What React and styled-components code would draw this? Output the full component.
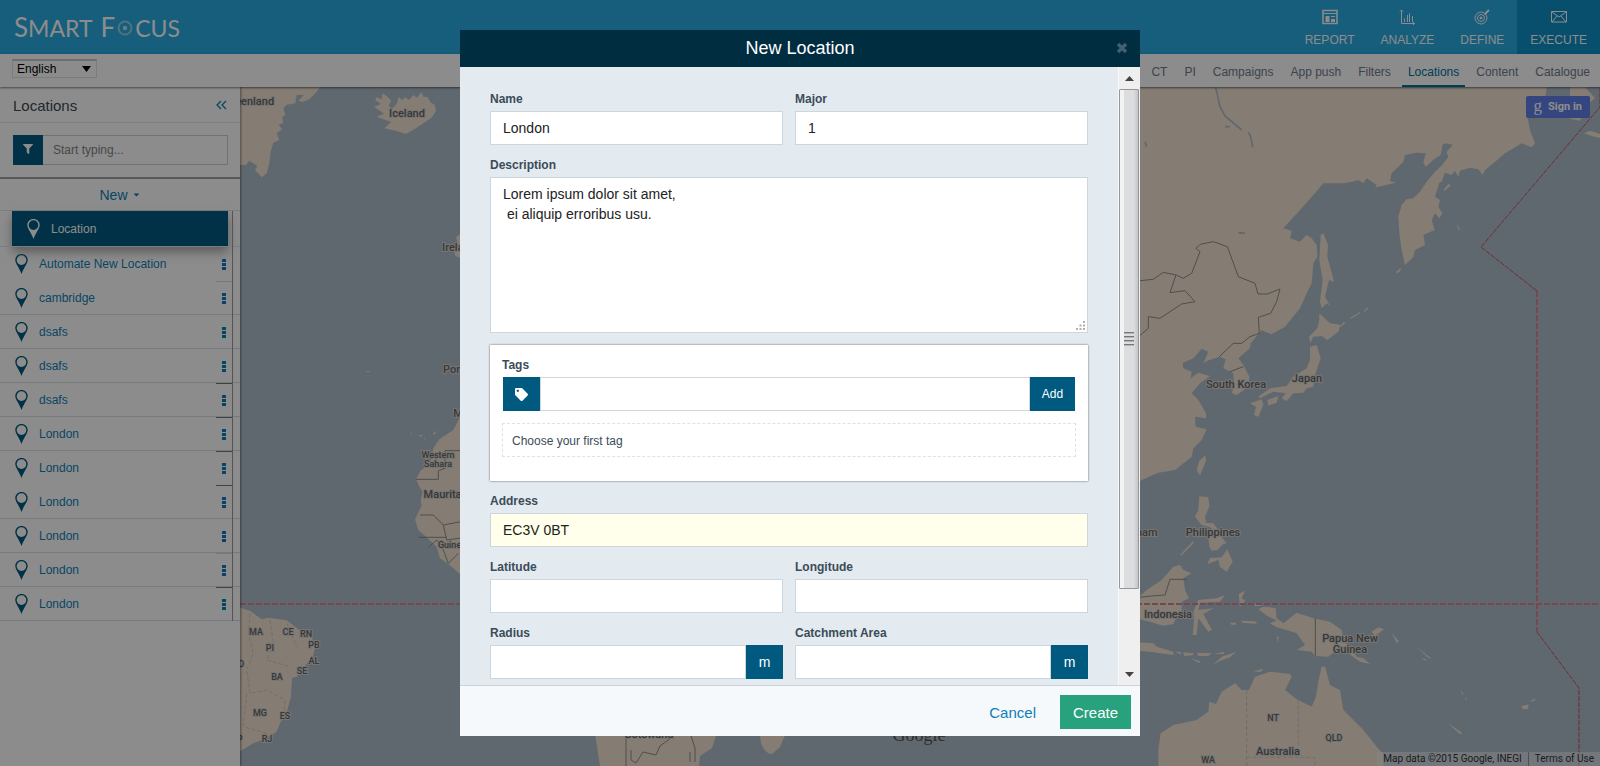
import React from "react";
import styled, { createGlobalStyle, css } from "styled-components";
import { FaCaretDown, FaFilter, FaTag } from "react-icons/fa";

const navy = "#005a80";
const link = "#0d7fb8";
const border = "#ccd6dd";

const GlobalStyle = createGlobalStyle`
  *, *::before, *::after { box-sizing: border-box; }
  body { margin: 0; background: #fff; }
  body, button, input, select, textarea {
    font-family: "Liberation Sans", Arial, sans-serif;
    font-size: 12px;
  }
  button { border: 0; padding: 0; background: none; cursor: pointer; }
`;

const Page = styled.div`
  display: flex;
  flex-direction: column;
  height: 100vh;
  min-height: 640px;
  overflow: hidden;
`;

/* ---------- top bars ---------- */

const TopBar = styled.header`
  display: flex;
  justify-content: space-between;
  height: 54px;
  background: #28abe1;
  color: #fff;
`;

const Logo = styled.a`
  display: flex;
  align-items: baseline;
  padding: 13px 0 0 14px;
  color: #fff;
  font: 23px/28px Lato, sans-serif;
  text-decoration: none;
`;

const Initial = styled.span`
  font-size: 26px;
  margin-left: ${(p) => (p.$spaced ? "8px" : "0")};
`;

const Target = styled.svg`
  align-self: flex-start;
  margin: 7px 2px 0;
`;

const MainNav = styled.nav`
  display: flex;
`;

const MainTab = styled.a`
  display: flex;
  flex-direction: column;
  align-items: center;
  gap: 7px;
  padding: 9px 13px 0;
  color: #fff;
  line-height: 16px;
  text-decoration: none;
  background: ${(p) => (p.$active ? "#0e90c6" : "none")};
`;

const SubBar = styled.div`
  display: flex;
  justify-content: space-between;
  height: 33px;
  padding: 0 4px 0 12px;
  background: #fff;
  position: relative;
  z-index: 2;
  box-shadow: 0 1px 2px rgba(0, 0, 0, 0.5);
`;

const LanguageBox = styled.div`
  position: relative;
  align-self: flex-start;
  margin-top: 5px;

  svg {
    position: absolute;
    right: 6px;
    top: 7px;
    pointer-events: none;
  }
`;

const LanguageSelect = styled.select`
  appearance: none;
  width: 85px;
  height: 19px;
  padding: 0 4px;
  border: 1px solid #e2e2e2;
  border-top: 2px solid #c8c8c8;
  background: #fff;
  color: #000;
`;

const SubNav = styled.nav`
  display: flex;
  gap: 5px;
`;

const SubTab = styled.a`
  padding: 0 6px;
  line-height: 37px;
  height: 33px;
  color: ${(p) => (p.$active ? "#00709f" : "#6f7a8c")};
  text-decoration: none;
  border-bottom: ${(p) => (p.$active ? "2px solid #00709f" : "0")};
`;

/* ---------- sidebar ---------- */

const Main = styled.main`
  display: flex;
  flex: 1;
  min-height: 0;
`;

const Sidebar = styled.aside`
  flex: 0 0 240px;
  background: #fff;
  position: relative;
  z-index: 1;
  box-shadow: 1px 0 2px rgba(0, 0, 0, 0.4);
`;

const SideHead = styled.div`
  display: flex;
  align-items: center;
  justify-content: space-between;
  height: 36px;
  padding: 2px 13px 0;
  border-bottom: 1px solid #e6ebee;

  h2 {
    margin: 0;
    font-size: 15px;
    font-weight: 400;
    color: #3c4a55;
  }
  button { height: 18px; line-height: 1; }
`;

const SearchRow = styled.div`
  display: flex;
  height: 56px;
  padding: 12px 12px 14px 13px;
  border-bottom: 2px solid #9aa0a4;

  button {
    width: 30px;
    height: 30px;
    background: ${navy};
    color: #fff;
    font-size: 10px;
    line-height: 1;
  }
  input {
    flex: 1;
    min-width: 0;
    height: 30px;
    padding: 0 10px;
    border: 1px solid #c5d3dd;
    border-left: 0;
  }
  input::placeholder { color: #7f8488; }
`;

const NewButton = styled.button`
  display: flex;
  align-items: center;
  justify-content: center;
  gap: 4px;
  width: 100%;
  height: 32px;
  border-bottom: 1px solid #e0e6ea;
  color: ${link};
  font-size: 14px;

  svg { font-size: 9px; }
`;

const CurrentItem = styled.a`
  display: flex;
  align-items: center;
  gap: 11px;
  height: 35px;
  margin: 0 12px;
  padding: 0 15px;
  background: ${navy};
  color: #fff;
  text-decoration: none;
  box-shadow: 0 6px 10px rgba(0, 0, 0, 0.35);
`;

const ListArea = styled.div`
  position: relative;
  &::after {
    content: "";
    position: absolute;
    top: 0;
    bottom: 0;
    right: 7px;
    border-right: 1px solid #9a9a9a;
  }
`;

const List = styled.ul`
  margin: 0;
  padding: 0;
  list-style: none;
  border-top: 1px solid #dde3e7;
`;

const Row = styled.li`
  display: flex;
  align-items: center;
  height: 34px;
  padding: 0 12px 0 15px;
  border-bottom: 1px solid ${(p) => (p.$line ? "#d8dfe3" : "transparent")};
  position: relative;

  a {
    display: flex;
    align-items: center;
    gap: 11px;
    flex: 1;
    color: ${link};
    text-decoration: none;
  }
  ${(p) =>
    p.$tick &&
    css`
      &::after {
        content: "";
        position: absolute;
        right: 8px;
        bottom: -2px;
        width: 16px;
        border-bottom: 1px solid ${p.$tick};
      }
    `}
`;

const Dots = styled.button`
  display: flex;
  flex-direction: column;
  gap: 1px;
  padding: 4px 2px 2px;

  span { width: 4px; height: 3px; background: ${link}; }
`;

/* ---------- map ---------- */

const MapArea = styled.section`
  flex: 1;
  min-width: 0;
  position: relative;
  background: #afbdca;

  > svg { display: block; width: 100%; height: 100%; overflow: visible; }
`;

const SignIn = styled.button`
  position: absolute;
  top: 9px;
  right: 10px;
  display: flex;
  align-items: center;
  gap: 6px;
  height: 22px;
  padding: 0 8px;
  border-radius: 2px;
  background: #5f7fe8;
  color: #fff;
  font: 700 11px/22px Roboto, sans-serif;

  span { font: 17px/16px "Liberation Serif", serif; padding-bottom: 3px; }
`;

const Credits = styled.div`
  position: absolute;
  right: 0;
  bottom: 0;
  display: flex;
  height: 14px;
  background: rgba(245, 245, 245, 0.5);
  color: #444;
  font: 10px/14px Roboto, sans-serif;

  span, a { padding: 0 6px; color: #333; text-decoration: none; }
  a { border-left: 1px solid #8e979f; }
`;

/* ---------- dialog ---------- */

const Backdrop = styled.div`
  position: fixed;
  inset: 0;
  z-index: 10;
  display: flex;
  justify-content: center;
  padding: 30px;
  background: rgba(0, 0, 0, 0.45);
`;

const Dialog = styled.form`
  display: flex;
  flex-direction: column;
  width: 100%;
  max-width: 680px;
  background: #e3eaf0;
`;

const DialogHead = styled.div`
  display: flex;
  flex: none;
  align-items: center;
  height: 37px;
  padding: 0 12px;
  background: #002d40;
  color: #fff;

  h1 {
    flex: 1;
    margin: 0;
    padding-left: 12px;
    text-align: center;
    font-size: 18px;
    font-weight: 400;
  }
  button { height: 14px; line-height: 1; }
`;

const DialogBody = styled.div`
  display: flex;
  flex: 1;
  min-height: 0;
`;

const Fields = styled.div`
  flex: 1;
  display: flex;
  flex-direction: column;
  gap: 12px;
  padding: 24px 30px 0;
  overflow: hidden;
`;

const Pair = styled.div`
  display: grid;
  grid-template-columns: 1fr 1fr;
  gap: 12px;
`;

const Field = styled.div`
  display: flex;
  flex-direction: column;
  gap: 4px;
  position: relative;
`;

const Label = styled.label`
  color: #3b4c58;
  font-weight: 700;
  line-height: 16px;
`;

const inputStyle = css`
  width: 100%;
  min-width: 0;
  border: 1px solid ${border};
  border-radius: 0;
  color: #222;
  font-size: 14px;
  outline: 0;
`;

const TextInput = styled.input`
  ${inputStyle}
  height: 34px;
  padding: 0 12px;
  background: ${(p) => (p.$filled ? "#ffffec" : "#fff")};
`;

const TextArea = styled.textarea`
  ${inputStyle}
  height: 156px;
  padding: 6px 12px;
  line-height: 20px;
  resize: none;
  overflow: hidden;
  background: #fff;
`;

const Grip = styled.svg`
  position: absolute;
  right: 3px;
  bottom: 3px;
`;

const Group = styled.div`
  display: flex;
  padding: ${(p) => (p.$inset ? "0 1px" : "0")};
`;

const AddOn = styled.span`
  flex: none;
  display: flex;
  align-items: center;
  justify-content: center;
  width: 37px;
  height: 34px;
  background: ${navy};
  color: #fff;
  font-size: 14px;
`;

const AddButton = styled.button`
  flex: none;
  width: 45px;
  height: 34px;
  background: ${navy};
  color: #fff;
`;

const TagPanel = styled.div`
  display: flex;
  flex-direction: column;
  gap: 12px;
  padding: 12px 12px 24px;
  background: #fff;
  box-shadow: 0 0 2px rgba(0, 0, 0, 0.6);
`;

const NoTags = styled.div`
  height: 34px;
  padding: 0 9px;
  border: 1px dashed #dbe3e6;
  color: #3b4c58;
  line-height: 34px;
`;

const ScrollTrack = styled.div`
  flex: 0 0 22px;
  display: flex;
  flex-direction: column;
  align-items: center;
  padding: 8px 1px 7px 0;
  background: #efefef;
  border-left: 1px solid #f8f8f8;
`;

const Thumb = styled.div`
  display: flex;
  flex-direction: column;
  align-items: center;
  justify-content: center;
  gap: 2px;
  align-self: stretch;
  height: 83%;
  margin: 8px 0 auto;
  border: 1px solid #979797;
  border-radius: 1px;
  background: linear-gradient(90deg, #f3f3f3 0 20%, #dcdddf 25% 75%, #c4c5c9);

  span { width: 10px; height: 2px; background: #777; border-bottom: 1px solid #b4b4b4; }
`;

const DialogFoot = styled.div`
  display: flex;
  flex: none;
  align-items: center;
  justify-content: flex-end;
  gap: 24px;
  height: 51px;
  padding: 2px 9px 0;
  border-top: 1px solid #cdd3d8;
  background: #f5f9fc;
`;

const Cancel = styled.button`
  color: ${link};
  font-size: 15px;
`;

const Create = styled.button`
  height: 34px;
  padding: 0 13px;
  background: #27a27c;
  color: #fff;
  font-size: 15px;
`;

/* ---------- drawings ---------- */

const Pin = ({ color }) => (
  <svg width="13" height="20" viewBox="0 0 13 20" aria-hidden="true">
    <path d="M6.500 0C2.900 0 .3 2.700.3 6c0 3.600 3.700 7.200 6.200 14C9 13.200 12.700 9.600 12.700 6c0-3.300-2.600-6-6.200-6zm0 1.300a4.700 4.700 0 0 1 4.800 4.800c0 2.900-2.100 4.900-4.800 4.900S1.700 9 1.700 6.100A4.700 4.700 0 0 1 6.500 1.300z" fill={color} />
  </svg>
);

const navIcons = {
  REPORT: (
    <g fill="none" stroke="#fff">
      <path d="M1 1.500h14v13H1z" strokeWidth="1.500" />
      <path d="M1 4.500h14" />
      <path d="M3.500 7h4v6h-4zM9 10h4v3H9z" fill="#fff" stroke="none" />
      <path d="M9 7.500h4" />
    </g>
  ),
  ANALYZE: (
    <path d="M2.500 1v13.500H16M1 2.500 2.500 1 4 2.500M14 13l1.500 1.500L14 16M5.500 13V9.500M8.500 13V6M10.500 13V4.500M13.500 13V7" fill="none" stroke="#fff" />
  ),
  DEFINE: (
    <g fill="none" stroke="#fff">
      <circle cx="7" cy="9" r="6" />
      <circle cx="7" cy="9" r="3.500" />
      <circle cx="7" cy="9" r="1" fill="#fff" />
      <path d="M10.500 5.500 15 1" strokeWidth="2" />
    </g>
  ),
  EXECUTE: (
    <path d="M.5 2.500h15v10.500H.5zM1 3l7 5 7-5M1 13l5-6M15 13l-5-6" fill="none" stroke="#fff" />
  ),
};

const land = "#f2e3d1";
const third = "scale(0.33333)";

const places = [
  [249, 105, "Greenland", 11], [407, 117, "Iceland", 11], [459, 251, "Ireland", 11],
  [464, 373, "Portugal", 11], [475, 417, "Morocco", 11], [438, 458, "Western", 9],
  [438, 467, "Sahara", 9], [450, 498, "Mauritania", 11], [452, 548, "Guinea", 9],
  [256, 635, "MA", 9], [288, 635, "CE", 9], [306, 637, "RN", 9], [270, 651, "PI", 9],
  [314, 648, "PB", 9], [314, 664, "AL", 9], [302, 674, "SE", 9], [238, 667, "GO", 9],
  [277, 680, "BA", 9], [260, 716, "MG", 9], [285, 719, "ES", 9], [267, 742, "RJ", 9],
  [237, 742, "SP", 9], [1236, 388, "South Korea", 11], [1307, 382, "Japan", 11],
  [1213, 536, "Philippines", 11], [1137, 536, "Vietnam", 11], [1168, 618, "Indonesia", 11],
  [1350, 642, "Papua New", 11], [1350, 653, "Guinea", 11], [1273, 721, "NT", 9],
  [1334, 741, "QLD", 9], [1278, 755, "Australia", 11], [1208, 763, "WA", 9],
  [649, 738, "Botswana", 11],
];

const WorldMap = () => (
  <svg viewBox="240 87 1360 679" preserveAspectRatio="xMidYMid slice" role="img" aria-label="World map">
    <g fill={land}>
      <g transform={third}>
        <path d="M720 262H960L950 275 928 298 908 306 895 302 912 284 890 285 886 310 860 314 850 325 856 345 846 352 850 368 836 374 846 388 830 400 838 420 820 428 812 455 808 490 800 520 786 532 765 510 772 498 748 482 738 494 720 495Z" />
        <path d="M1122 320 1142 312 1126 300 1130 292 1145 298 1148 280 1162 290 1174 302 1166 316 1175 327 1190 312 1196 290 1206 300 1216 292 1228 300 1240 285 1250 293 1265 277 1270 290 1284 292 1290 306 1304 314 1308 332 1296 352 1270 370 1248 385 1218 402 1190 393 1153 385 1174 366 1130 350 1152 341Z" />
        <path d="M1380 703 1368 712 1375 735 1362 752 1366 768 1400 780V703Z" />
        <path d="M1400 1255H1378L1360 1290 1318 1318 1300 1345 1290 1390 1262 1412 1248 1438 1258 1460 1268 1475 1262 1500 1265 1517 1245 1558 1255 1590 1280 1612 1310 1640 1320 1675 1345 1692 1380 1722 1400 1740Z" />
        <path d="M1255 1306l10-2v8zM1270 1314l6-1v6zM1302 1292l6 8-8 6zM1232 1298h4v3h-4zM1100 1113h8v3h-8z" />
        <path d="M720 1823 750 1832 785 1858 806 1853 860 1861 895 1888 935 1910 945 1945 938 1970 925 1985 890 2030 876 2034 873 2090 862 2130 840 2170 830 2195 800 2214 760 2230 720 2254Z" />
      </g>
      <path d="M594 720 596 740 600 766H699L700 756 712 748 716 736V720ZM758 720 761 743Q765 754 772 754L780 747 786 733V720Z" />
      <g transform={`translate(1130 0) ${third}`}>
        <path d="M0 262H1250L1245 300 1193 355 1200 390 1215 430 1205 442 1175 430 1125 460 1090 490 1065 510 1058 525 1045 508 1020 503 990 512 985 530 975 512 965 525 945 518 935 545 928 548 915 590 930 600 925 620 937 640 928 655 915 640 905 660 914 690 880 705 885 735 855 750 850 770 825 795 815 750 808 700 805 650 815 615 830 598 850 595 870 575 890 545 915 515 932 500 955 472 950 455 968 435 950 430 938 433 932 465 912 478 888 500 880 490 887 460 860 458 825 465 820 485 785 520 780 543 797 548 755 558 735 563 740 555 710 535 700 550 685 540 665 545 640 550 580 550 555 580 510 630 460 685 485 692 480 715 510 725 530 705 545 715 560 735 562 770 550 790 545 850 530 880 510 925 465 980 425 1003 405 995 395 990 362 1030 360 1045 325 1075 340 1095 358 1130 355 1160 320 1185 306 1180 312 1150 310 1120 280 1105 287 1078 268 1070 232 1082 220 1090 235 1055 215 1046 190 1075 158 1088 160 1105 185 1115 182 1135 205 1118 240 1128 210 1150 185 1180 205 1200 228 1240 228 1255 195 1250 197 1280 230 1288 215 1320 190 1345 185 1370 135 1410 85 1418 35 1440 0 1470Z" />
        <path d="M1320 262H1365L1395 294 1375 312 1350 362 1320 356ZM1362 400 1380 392 1410 402V414L1385 408ZM940 570 955 552 962 556 945 572ZM980 672 992 690 985 688Z" />
        <path d="M572 705 580 700 594 735 592 770 612 845 597 840 585 890 600 918 590 910 575 925 570 905 578 840 568 780Z" />
        <path d="M568 940 600 970 632 974 625 995 592 1020 575 1008 550 1010 541 1030 537 1010 562 985 568 960ZM632 978 642 966 646 968 634 980ZM660 954 690 936 692 938 662 957ZM702 932 714 922 716 925 704 935ZM798 816 812 804 812 812 802 820Z" />
        <path d="M540 1040 560 1035 572 1075 555 1125 550 1160 530 1165 520 1178 490 1180 470 1203 455 1195 468 1180 430 1175 390 1195 385 1190 420 1165 470 1158 490 1130 530 1105 540 1080Z" />
        <path d="M360 1210 395 1198 400 1215 385 1250 372 1245 378 1220ZM412 1200 445 1188 440 1208 415 1217Z" />
        <path d="M225 1367 229 1380 210 1426 200 1410 208 1382Z" />
        <path d="M208 1489 235 1492 238 1520 225 1550 228 1568 250 1570 265 1590 262 1600 240 1582 215 1575 195 1550 205 1530ZM235 1612 270 1605 290 1630 280 1632 262 1650 245 1652 238 1640ZM292 1648 308 1685 290 1715 270 1700 265 1680 232 1692 240 1674 275 1672ZM150 1665 190 1622 190 1630 155 1666Z" />
        <path d="M0 1815 50 1770 95 1740 130 1700 150 1695 160 1710 184 1720 160 1735 165 1770 177 1795 155 1805 155 1835 140 1850 130 1872 100 1877 60 1865 0 1850Z" />
        <path d="M190 1835 205 1800 260 1795 285 1785 270 1805 210 1808 205 1830 250 1825 220 1842 246 1890 235 1895 205 1855 200 1905 188 1905 192 1860ZM326 1782 345 1772 335 1795 346 1802 330 1820Z" />
        <path d="M0 1925 70 1930 80 1940 130 1955 130 1965 60 1955 0 1950ZM135 1955l18 1v8zM160 1957l30 3v6l-28 2zM200 1958l45 2-10 8h-30zM250 1962l32-6v6zM180 1975l30 8-2 6zM248 1996 275 1970 318 1956 300 1972 270 1982Z" />
        <path d="M385 1828 400 1820 437 1824 440 1855 460 1870 500 1838 550 1855 600 1865 635 1890 640 1920 680 1970 700 1975 720 1992 690 1985 655 1960 620 1950 595 1970 555 1968 545 1955 500 1950 525 1935 500 1900 470 1890 440 1882 420 1870 440 1862 412 1848ZM300 1868h18v6h-14zM335 1862l40 2 6 8-44-4zM440 1910l6 0-2 18zM375 1812h20v6h-20zM725 1895 745 1882 762 1888 735 1908ZM785 1900 808 1925 800 1928ZM860 1942 905 1976 895 1974ZM875 1974l14 4-4 4z" />
        <path d="M85 2298 85 2250 92 2200 130 2175 200 2160 235 2135 238 2105 258 2112 275 2075 315 2050 335 2070 357 2070 375 2030 420 2015 480 2022 485 2030 465 2070 500 2098 545 2120 558 2090 565 2045 575 2000 585 2000 600 2055 630 2070 640 2130 700 2190 740 2240 760 2262V2298ZM370 2014 400 2006 392 2016Z" />
        <path d="M950 2167 998 2200 990 2202ZM1175 2118 1195 2114 1195 2126 1178 2128ZM1198 2104 1218 2095 1212 2104ZM990 2066l12 18-4 0zM1005 2092l6 6-4 2z" />
      </g>
    </g>
    <g transform={`translate(1130 0) ${third}`} fill="none" stroke="#afbdca" strokeWidth="5">
      <path d="M257 262 270 320 285 348 335 390M355 397 362 410 368 442M285 380H300M45 425 50 440M325 698 345 700" />
    </g>
    <g fill="none" stroke="#8f8f8c">
      <g strokeWidth="3">
        <path transform={third} d="M1400 1352H1335V1405L1315 1412V1438H1248M1260 1545H1300L1330 1575 1400 1562M1330 1575 1340 1620 1400 1612M1255 1612H1340M1285 1642 1310 1620 1330 1650 1345 1690 1375 1660" />
        <path transform={`translate(1130 0) ${third}`} d="M0 845 70 838 100 817 138 825 160 835 185 820 210 755 198 745 210 733 250 725 292 740 325 830 375 850 384 882 412 882 450 867 440 905 422 940 385 952 388 1000 360 1010 335 1030 310 1030 268 1070M138 825 120 878 165 872 195 905 155 912 90 955 55 950 55 985 0 1032M300 1115 340 1100M556 1855V1968M0 1795 65 1788 105 1785 120 1738 170 1738" />
      </g>
      <path d="M626 736V766M631 750V760L636 763 643 752 656 755 660 746 671 738M691 736 695 748V762M690 762V752" />
      <g strokeWidth="3" strokeDasharray="12 6" stroke="#d6c9b8" transform={third}>
        <path d="M750 1840 745 1900 760 1960 740 2010 750 2080 800 2070 855 2100 850 2160M810 1860 820 1930 800 1980 870 2000M860 1870 890 1940M740 2080 730 2180 800 2200" />
        <path d="M3740 2070V2298M3895 2098V2240M3740 2272H3945V2298" />
      </g>
    </g>
    <g fill="none" stroke="#da818c">
      <path d="M240 604H1600" strokeWidth="2" strokeDasharray="6 2" />
      <path d="M1600 87V107L1481 247 1537 291" stroke="#c8505c" strokeDasharray="5 1" />
      <path d="M1537 291V632" strokeWidth="2" strokeDasharray="6 2" />
      <path d="M1537 632 1579 688V766" stroke="#c8505c" strokeDasharray="5 1" />
    </g>
    <g fill="#666" stroke="#d9d6d2" strokeWidth="2" paintOrder="stroke" textAnchor="middle" fontFamily="Roboto, sans-serif" fontWeight="500">
      {places.map(([x, y, name, size]) => (
        <text key={name + x + y} x={x} y={y} fontSize={size}>{name}</text>
      ))}
    </g>
    <text x="919" y="741" textAnchor="middle" fontFamily="Liberation Serif, serif" fontSize="18" fill="#555">Google</text>
  </svg>
);

/* ---------- data ---------- */

const sections = ["CT", "PI", "Campaigns", "App push", "Filters", "Locations", "Content", "Catalogue"];

const dark = "#777";
const faint = "#dadada";
const locations = [
  { name: "Automate New Location", line: false, tick: faint },
  { name: "cambridge", line: true },
  { name: "dsafs", line: true },
  { name: "dsafs", line: true, tick: dark },
  { name: "dsafs", line: true, tick: dark },
  { name: "London", line: true, tick: dark },
  { name: "London", line: false, tick: dark },
  { name: "London", line: true },
  { name: "London", line: true, tick: faint },
  { name: "London", line: true, tick: dark },
  { name: "London", line: true },
];

const LabeledInput = ({ id, label, value, unit, filled }) => (
  <Field>
    <Label htmlFor={id}>{label}</Label>
    <Group>
      <TextInput id={id} defaultValue={value} $filled={filled} />
      {unit && <AddOn>{unit}</AddOn>}
    </Group>
  </Field>
);

export default function App() {
  return (
    <>
      <GlobalStyle />
      <Page>
        <TopBar>
          <Logo href="#" aria-label="Smart Focus">
            <Initial>S</Initial>MART<Initial $spaced>F</Initial>
            <Target width="16" height="16" viewBox="0 0 16 16" aria-hidden="true">
              <circle cx="8" cy="8" r="6.500" fill="none" stroke="#8fd0ea" strokeWidth="2" />
              <circle cx="8" cy="8" r="2.200" fill="#b9e2f3" />
            </Target>
            CUS
          </Logo>
          <MainNav aria-label="Main">
            {Object.entries(navIcons).map(([name, icon]) => (
              <MainTab key={name} href="#" $active={name === "EXECUTE"}>
                <svg width="16" height="16" viewBox="0 0 16 16" aria-hidden="true">{icon}</svg>
                {name}
              </MainTab>
            ))}
          </MainNav>
        </TopBar>
        <SubBar>
          <LanguageBox>
            <LanguageSelect aria-label="Language" defaultValue="English">
              <option>English</option>
            </LanguageSelect>
            <svg width="9" height="6" viewBox="0 0 9 6" aria-hidden="true">
              <path d="M0 0h9L4.500 6z" />
            </svg>
          </LanguageBox>
          <SubNav aria-label="Execute">
            {sections.map((name) => (
              <SubTab key={name} href="#" $active={name === "Locations"}>{name}</SubTab>
            ))}
          </SubNav>
        </SubBar>
        <Main>
          <Sidebar>
            <SideHead>
              <h2>Locations</h2>
              <button type="button" aria-label="Collapse panel">
                <svg width="11" height="10" viewBox="0 0 11 10" aria-hidden="true">
                  <path d="M5 1 1 5l4 4M10 1 6 5l4 4" fill="none" stroke={link} strokeWidth="1.300" />
                </svg>
              </button>
            </SideHead>
            <SearchRow>
              <button type="button" aria-label="Filter"><FaFilter /></button>
              <input aria-label="Search locations" placeholder="Start typing..." />
            </SearchRow>
            <NewButton type="button">New <FaCaretDown /></NewButton>
            <ListArea>
              <CurrentItem href="#"><Pin color="#fff" />Location</CurrentItem>
              <List>
                {locations.map(({ name, line, tick }, i) => (
                  <Row key={i} $line={line} $tick={tick}>
                    <a href="#"><Pin color={navy} />{name}</a>
                    <Dots type="button" aria-label={`Options for ${name}`}><span /><span /><span /></Dots>
                  </Row>
                ))}
              </List>
            </ListArea>
          </Sidebar>
          <MapArea>
            <WorldMap />
            <SignIn type="button"><span>g</span>Sign in</SignIn>
            <Credits><span>Map data ©2015 Google, INEGI</span><a href="#">Terms of Use</a></Credits>
          </MapArea>
        </Main>
      </Page>
      <Backdrop>
        <Dialog role="dialog" aria-modal="true" aria-labelledby="dialog-title">
          <DialogHead>
            <h1 id="dialog-title">New Location</h1>
            <button type="button" aria-label="Close">
              <svg width="12" height="12" viewBox="0 0 12 12" aria-hidden="true">
                <path d="M2 2l8 8M10 2l-8 8" stroke="#43606e" strokeWidth="3.500" />
              </svg>
            </button>
          </DialogHead>
          <DialogBody>
            <Fields>
              <Pair>
                <LabeledInput id="name" label="Name" value="London" />
                <LabeledInput id="major" label="Major" value="1" />
              </Pair>
              <Field>
                <Label htmlFor="description">Description</Label>
                <TextArea id="description" defaultValue={"Lorem ipsum dolor sit amet,\n ei aliquip erroribus usu."} />
                <Grip width="9" height="9" viewBox="0 0 9 9" aria-hidden="true">
                  <path d="M7 0h2v2H7zM7 3.500h2v2H7zM3.500 3.500h2v2h-2zM7 7h2v2H7zM3.500 7h2v2h-2zM0 7h2v2H0z" fill="#b0b0b0" />
                </Grip>
              </Field>
              <TagPanel>
                <Field>
                  <Label htmlFor="tags">Tags</Label>
                  <Group $inset>
                    <AddOn><FaTag size={13} /></AddOn>
                    <TextInput id="tags" />
                    <AddButton type="button">Add</AddButton>
                  </Group>
                </Field>
                <NoTags>Choose your first tag</NoTags>
              </TagPanel>
              <LabeledInput id="address" label="Address" value="EC3V 0BT" filled />
              <Pair>
                <LabeledInput id="latitude" label="Latitude" />
                <LabeledInput id="longitude" label="Longitude" />
              </Pair>
              <Pair>
                <LabeledInput id="radius" label="Radius" unit="m" />
                <LabeledInput id="catchment" label="Catchment Area" unit="m" />
              </Pair>
            </Fields>
            <ScrollTrack aria-hidden="true">
              <svg width="9" height="6" viewBox="0 0 9 6"><path d="M0 6h9L4.500 1z" fill="#444" /></svg>
              <Thumb><span /><span /><span /><span /></Thumb>
              <svg width="9" height="6" viewBox="0 0 9 6"><path d="M0 0h9L4.500 5z" fill="#444" /></svg>
            </ScrollTrack>
          </DialogBody>
          <DialogFoot>
            <Cancel type="button">Cancel</Cancel>
            <Create type="button">Create</Create>
          </DialogFoot>
        </Dialog>
      </Backdrop>
    </>
  );
}
